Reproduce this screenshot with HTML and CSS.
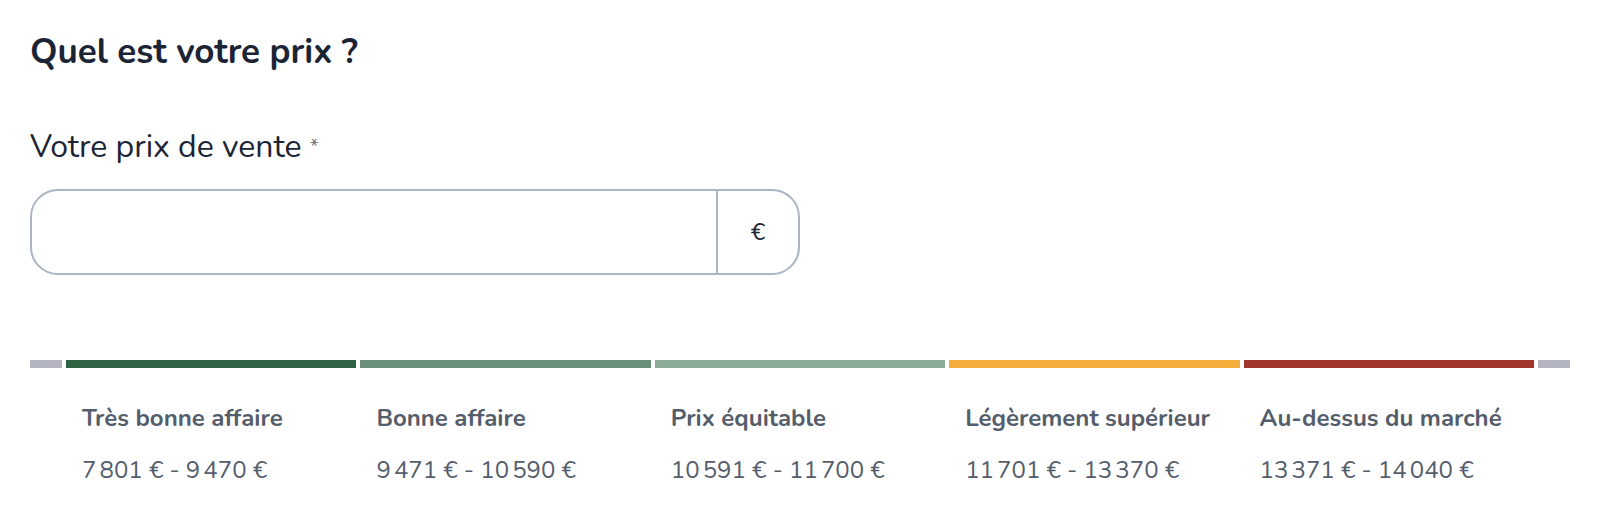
FILE: index.html
```html
<!DOCTYPE html>
<html lang="fr">
<head>
<meta charset="utf-8">
<title>Quel est votre prix ?</title>
<link rel="stylesheet" href="styles.css">
</head>
<body>
<main class="page">
  <h1 class="title">Quel est votre prix ?</h1>
  <label class="field-label" for="price">Votre prix de vente <span class="req">*</span></label>
  <div class="input-group">
    <input id="price" class="input" type="text">
    <span class="addon">€</span>
  </div>
  <div class="scale">
    <div class="bar bar-end"></div>
    <div class="bar c1"></div>
    <div class="bar c2"></div>
    <div class="bar c3"></div>
    <div class="bar c4"></div>
    <div class="bar c5"></div>
    <div class="bar bar-end"></div>

    <div class="spacer"></div>
    <div class="cat"><div class="cat-name">Très bonne affaire</div><div class="cat-range">7&#8239;801&nbsp;€ - 9&#8239;470&nbsp;€</div></div>
    <div class="cat"><div class="cat-name">Bonne affaire</div><div class="cat-range">9&#8239;471&nbsp;€ - 10&#8239;590&nbsp;€</div></div>
    <div class="cat"><div class="cat-name">Prix équitable</div><div class="cat-range">10&#8239;591&nbsp;€ - 11&#8239;700&nbsp;€</div></div>
    <div class="cat"><div class="cat-name">Légèrement supérieur</div><div class="cat-range">11&#8239;701&nbsp;€ - 13&#8239;370&nbsp;€</div></div>
    <div class="cat"><div class="cat-name">Au-dessus du marché</div><div class="cat-range">13&#8239;371&nbsp;€ - 14&#8239;040&nbsp;€</div></div>
    <div class="spacer"></div>
  </div>
</main>
</body>
</html>
```
FILE: styles.css
```css
html, body {
  margin: 0;
  padding: 0;
  background: #ffffff;
}
body {
  font-family: Nunito, Lato, "Noto Sans", sans-serif;
  color: #1b2435;
}
.page {
  padding: 30px 28px 0 30px;
  display: flex;
  flex-direction: column;
  align-items: flex-start;
}
.title {
  margin: 0;
  font-size: 35px;
  line-height: 44px;
  font-weight: 700;
  color: #1b2435;
}
.field-label {
  margin-top: 53px;
  font-size: 32px;
  line-height: 40px;
  color: #1b2435;
}
.req {
  font-size: 20px;
  color: #6b7280;
  vertical-align: 4px;
}
.input-group {
  margin-top: 22px;
  width: 770px;
  height: 86px;
  box-sizing: border-box;
  border: 2px solid #aab4c4;
  border-radius: 28px;
  display: flex;
  overflow: hidden;
}
.input {
  flex: 1;
  border: 0;
  outline: none;
  background: transparent;
  font: inherit;
  font-size: 24px;
  padding: 0 24px;
  min-width: 0;
}
.addon {
  width: 80px;
  border-left: 2px solid #aab4c4;
  display: flex;
  align-items: center;
  justify-content: center;
  font-size: 24px;
  color: #1b2435;
}
.scale {
  align-self: stretch;
  margin-top: 85px;
  display: grid;
  grid-template-columns: 32px repeat(5, 1fr) 32px;
  column-gap: 4px;
}
.bar {
  height: 8px;
}
.bar-end { background: #b3b5c0; }
.c1 { background: #2e6443; }
.c2 { background: #6a8e78; }
.c3 { background: #8bab96; }
.c4 { background: #f4ad3b; }
.c5 { background: #a1342b; }
.cat {
  padding: 35px 0 0 16px;
  color: #545d6b;
}
.cat-name {
  font-size: 24px;
  line-height: 30px;
  font-weight: 700;
}
.cat-range {
  margin-top: 22px;
  font-size: 24px;
  line-height: 30px;
}
```
